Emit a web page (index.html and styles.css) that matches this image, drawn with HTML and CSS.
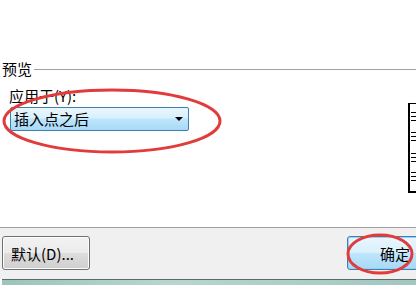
FILE: index.html
```html
<!DOCTYPE html>
<html lang="zh-CN">
<head>
    <meta charset="UTF-8">
    <title>预览</title>
    <link rel="stylesheet" href="styles.css">
</head>
<body>

<div class="dialog">
    <div class="main">
        <div class="legend">
            <span>预览</span>
            <div class="legend-line"></div>
        </div>
        <div class="content">
            <div class="apply">
                <div class="label">应用于(Y):</div>
                <div class="combo">
                    <span>插入点之后</span>
                    <span class="arrow"></span>
                </div>
            </div>
            <div class="page">
                <svg width="8" height="80" viewBox="0 0 8 80">
                    <g stroke="#000" stroke-width="1">
                        <path d="M1 8.5H8M1 12.5H8M1 16.5H8"/>
                        <path d="M1 28.5H8M1 32.5H8M1 36.5H8"/>
                        <path d="M1 49.5H8M1 53.5H8M1 57.5H8"/>
                        <path d="M1 68.5H8M1 72.5H8M1 76.5H8"/>
                    </g>
                </svg>
            </div>
        </div>
    </div>
    <div class="footer">
        <button class="btn btn-default">默认(D)...</button>
        <button class="btn btn-ok">确定</button>
    </div>
    <div class="taskbar"></div>

    <svg class="marks" width="416" height="285">
        <ellipse cx="112" cy="121" rx="108" ry="31" />
        <ellipse cx="380" cy="254" rx="32" ry="19" />
    </svg>
</div>

</body>
</html>
```

FILE: styles.css
```css
body {
    margin: 0;
    font-family: "Noto Sans CJK SC", "Noto Sans", sans-serif;
    font-size: 15px;
    color: #000;
    background-color: #fff;
}
.dialog {
    position: relative;
    width: 416px;
    height: 285px;
    overflow: hidden;
}
.main {
    height: 227px;
    padding-top: 60px;
    box-sizing: border-box;
    background-color: #fff;
}
.legend {
    display: flex;
    align-items: center;
    gap: 2px;
    height: 18px;
    line-height: 18px;
    padding-left: 2px;
}
.legend-line {
    flex: 1;
    border-top: 1px solid #a0a0a0;
}
.content {
    display: flex;
    justify-content: space-between;
    margin-top: 9px;
}
.apply {
    padding-left: 9px;
}
.label {
    height: 18px;
    line-height: 18px;
}
.combo {
    display: flex;
    align-items: center;
    justify-content: space-between;
    width: 179px;
    height: 24px;
    margin-top: 2px;
    margin-left: 1px;
    padding: 0 5px 0 3px;
    box-sizing: border-box;
    border: 1px solid #3c7fb1;
    border-radius: 2px;
    background: linear-gradient(#eaf6fd, #d9f0fc 45%, #bee6fd 50%, #a7d9f5);
    line-height: 20px;
}
.arrow {
    width: 0;
    height: 0;
    border-left: 4px solid transparent;
    border-right: 4px solid transparent;
    border-top: 4px solid #000;
}
.page {
    width: 20px;
    height: 87px;
    margin-top: 16px;
    margin-right: -14px;
    border-left: 2px solid #000;
    border-top: 1px solid #000;
    border-bottom: 2px solid #000;
    background-color: #fff;
}
.page svg {
    display: block;
}
.footer {
    display: flex;
    justify-content: space-between;
    height: 52px;
    padding: 8px 0 0 2px;
    box-sizing: border-box;
    border-top: 1px solid #a0a0a0;
    background-color: #f0f0f0;
}
.btn {
    height: 34px;
    font-family: inherit;
    font-size: 15px;
    color: #000;
    border-radius: 3px;
    padding: 0;
}
.btn-default {
    width: 88px;
    text-align: left;
    padding-left: 8px;
    border: 1px solid #707070;
    background: linear-gradient(#f2f2f2, #ebebeb 50%, #dddddd 51%, #cfcfcf);
    box-shadow: inset 0 0 0 1px #fcfcfc;
}
.btn-ok {
    width: 96px;
    margin-right: -27px;
    border: 1px solid #3c7fb1;
    background: linear-gradient(#eaf6fd, #d9f0fc 50%, #bee6fd 51%, #a7d9f5);
    box-shadow: inset 0 0 0 1px #97d2f2;
}
.taskbar {
    height: 6px;
    margin-left: 2px;
    border-top: 1px solid #5c6b68;
    background: linear-gradient(90deg, #9cc4bb, #b6d6cf 40%, #a2c7c0);
}
.marks {
    position: absolute;
    left: 0;
    top: 0;
    pointer-events: none;
}
.marks ellipse {
    fill: none;
    stroke: #e23b3b;
    stroke-width: 3;
}
```
